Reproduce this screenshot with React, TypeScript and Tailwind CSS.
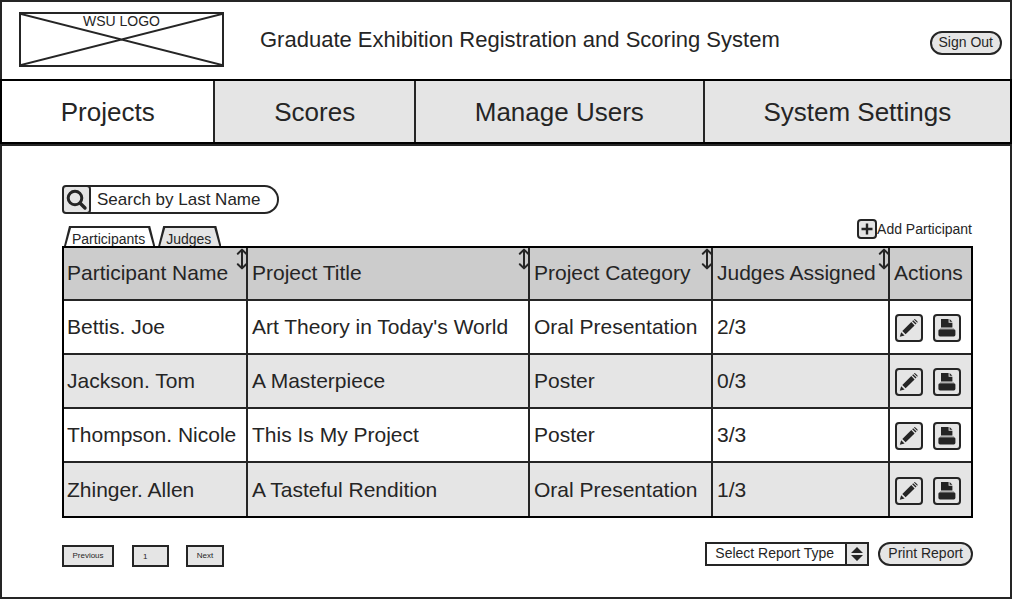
import type { ReactNode } from "react";

const tabs = ["Projects", "Scores", "Manage Users", "System Settings"];

const columns = [
  { label: "Participant Name", sortable: true },
  { label: "Project Title", sortable: true },
  { label: "Project Category", sortable: true },
  { label: "Judges Assigned", sortable: true },
  { label: "Actions", sortable: false },
];

const projects = [
  { name: "Bettis. Joe", title: "Art Theory in Today's World", category: "Oral Presentation", judges: "2/3" },
  { name: "Jackson. Tom", title: "A Masterpiece", category: "Poster", judges: "0/3" },
  { name: "Thompson. Nicole", title: "This Is My Project", category: "Poster", judges: "3/3" },
  { name: "Zhinger. Allen", title: "A Tasteful Rendition", category: "Oral Presentation", judges: "1/3" },
];

function SortIcon() {
  return (
    <svg viewBox="0 0 12 22" className="h-[22px] w-3" fill="none" stroke="#252525" strokeWidth="2" strokeLinecap="round" strokeLinejoin="round" aria-hidden="true">
      <path d="M6 2V20M1.8 5.8L6 1.6L10.2 5.8M1.8 16.2L6 20.4L10.2 16.2" />
    </svg>
  );
}

function PencilIcon() {
  return (
    <svg viewBox="0 0 24 24" className="size-6" fill="#252525" aria-hidden="true">
      <path d="M2.8 20.8L4.2 16.2L7.6 19.5Z" />
      <path d="M5.3 14.9L14.3 6.1L17.6 9.4L8.6 18.3Z" />
      <path d="M15.2 5.2L16.2 4.2L19.5 7.5L18.5 8.5Z" />
      <path d="M17 3.4Q17.7 2.7 18.4 3.4L20.3 5.3Q21 6 20.3 6.7L20.2 6.8L16.9 3.5Z" />
    </svg>
  );
}

function PrinterIcon() {
  return (
    <svg viewBox="0 0 24 24" className="size-6" fill="#252525" aria-hidden="true">
      <path d="M6 3H13.6V6.8H17.4V11.4H6Z" />
      <path d="M14.6 3L17.4 5.8H14.6Z" />
      <rect x="3.4" y="13.2" width="17" height="7.2" rx="1.6" />
      <path d="M5 12.8H19" stroke="#888888" strokeWidth="0.8" />
    </svg>
  );
}

function IconButton({ label, children }: { label: string; children: ReactNode }) {
  return (
    <button type="button" aria-label={label} className="flex size-7 items-center justify-center rounded border-2 border-[#252525] bg-[#e5e5e5]">
      {children}
    </button>
  );
}

function TableTab({ label, active }: { label: string; active?: boolean }) {
  return (
    <button
      type="button"
      role="tab"
      aria-selected={!!active}
      className="grid h-5 bg-[#252525] text-sm leading-5 [clip-path:polygon(5px_0,calc(100%-5px)_0,100%_100%,0_100%)]"
    >
      <span
        className={
          "h-5 pt-[3px] pr-2.5 pl-2 [clip-path:polygon(7px_2px,calc(100%-7px)_2px,calc(100%-2px)_100%,2px_100%)] " +
          (active ? "bg-white" : "bg-[#e5e5e5]")
        }
      >
        {label}
      </span>
    </button>
  );
}

export default function App() {
  return (
    <div className="bg-white font-['Liberation_Sans',Arial,sans-serif] text-[#252525]">
      <header className="flex h-[79px] items-start border-x-2 border-t-2 border-[#252525] pt-2.5 pr-2 pl-[17px]">
        <div className="relative flex h-[55px] w-[205px] shrink-0 justify-center border-2 border-[#252525]">
          <svg viewBox="0 0 201 51" preserveAspectRatio="none" className="absolute inset-0 size-full" stroke="#252525" strokeWidth="2" aria-hidden="true">
            <path d="M0 0L201 51M0 51L201 0" />
          </svg>
          <span className="relative text-sm leading-3.5">WSU LOGO</span>
        </div>
        <h1 className="ml-9 flex-1 pt-3 text-[22px] leading-8">Graduate Exhibition Registration and Scoring System</h1>
        <button type="button" className="mt-[19px] h-6 rounded-full border-2 border-[#252525] bg-[#e5e5e5] px-[7px] pb-0.5 text-sm leading-[18px]">
          Sign Out
        </button>
      </header>

      <nav className="flex h-[65px] border-x-2 border-y-2 border-black text-[26px]">
        {tabs.map((tab, i) => (
          <a
            key={tab}
            href="#"
            aria-current={i === 0 ? "page" : undefined}
            className={
              "flex flex-auto items-center justify-center border-[#252525] px-10 pt-0.5 whitespace-nowrap not-last:border-r-2 " +
              (i === 0 ? "bg-white" : "bg-[#e5e5e5]")
            }
          >
            {tab}
          </a>
        ))}
      </nav>

      <main className="border-2 border-[#252525] pt-[39px] pr-[37px] pb-[30px] pl-[60px]">
        <form className="flex h-[29px] w-[217px]" role="search">
          <button type="button" aria-label="Search" className="flex w-[29px] shrink-0 items-center justify-center rounded border-2 border-[#252525] bg-[#e5e5e5]">
            <svg viewBox="0 0 24 24" className="size-6" fill="none" stroke="#252525" aria-hidden="true">
              <circle cx="10" cy="10" r="6.8" strokeWidth="3" />
              <path d="M15.2 15.2L20 20" strokeWidth="3.4" strokeLinecap="round" />
            </svg>
          </button>
          <input
            type="text"
            aria-label="Search by Last Name"
            placeholder="Search by Last Name"
            className="-ml-1 min-w-0 flex-1 rounded-r-full border-2 border-l-0 border-[#252525] bg-transparent pl-2.5 text-[17px] outline-none placeholder:text-[#252525] placeholder:opacity-100"
          />
        </form>

        <div className="mt-[5px] flex h-[27px] items-end justify-between">
          <div role="tablist" className="ml-0.5 flex gap-[3px]">
            <TableTab label="Participants" active />
            <TableTab label="Judges" />
          </div>
          <button type="button" className="mr-px mb-[7px] flex items-center text-sm leading-5">
            <span className="flex size-5 items-center justify-center rounded-sm border-2 border-[#252525] bg-[#e5e5e5]">
              <svg viewBox="0 0 12 12" className="size-3" stroke="#252525" strokeWidth="2.4" aria-hidden="true">
                <path d="M6 0.5V11.5M0.5 6H11.5" />
              </svg>
            </span>
            Add Participant
          </button>
        </div>

        <table className="w-full table-fixed border-separate border-spacing-0 border-2 border-black text-left text-[21px] leading-6 whitespace-nowrap">
          <colgroup>
            <col className="w-[184px]" />
            <col />
            <col className="w-[183px]" />
            <col className="w-[177px]" />
            <col className="w-[81px]" />
          </colgroup>
          <thead>
            <tr className="h-[53px] bg-[#cccccc]">
              {columns.map((column) => (
                <th key={column.label} scope="col" className="relative border-b-2 border-[#252525] pt-0 pb-0.5 pl-1 font-normal first:pl-[3px] not-last:border-r-2">
                  {column.label}
                  {column.sortable && (
                    <button type="button" aria-label={"Sort by " + column.label} className="absolute top-0 -right-0.5">
                      <SortIcon />
                    </button>
                  )}
                </th>
              ))}
            </tr>
          </thead>
          <tbody>
            {projects.map((project) => (
              <tr key={project.name} className="h-[54px] even:bg-[#e5e5e5] last:h-[53px] *:border-[#252525] *:py-0 *:pl-1 *:first:pl-[3px] *:not-last:border-r-2 not-last:*:border-b-2">
                <td>{project.name}</td>
                <td>{project.title}</td>
                <td>{project.category}</td>
                <td>{project.judges}</td>
                <td>
                  <div className="flex gap-2.5 pt-0.5 pl-px">
                    <IconButton label={"Edit " + project.name}>
                      <PencilIcon />
                    </IconButton>
                    <IconButton label={"Print " + project.name}>
                      <PrinterIcon />
                    </IconButton>
                  </div>
                </td>
              </tr>
            ))}
          </tbody>
        </table>

        <div className="mt-6 flex items-start justify-between">
          <div className="mt-[3px] flex text-[8px] leading-[18px] *:h-[22px] *:border-2 *:border-[#252525] *:bg-[#e5e5e5]">
            <button type="button" className="w-[52px]">Previous</button>
            <input type="text" aria-label="Page" defaultValue="1" className="ml-[18px] w-[37px] pl-[9px]" />
            <button type="button" className="ml-[17px] w-[38px]">Next</button>
          </div>
          <div className="flex gap-[9px] text-sm leading-[18px]">
            <div className="grid w-[164px] *:[grid-area:1/1]">
              <select aria-label="Report type" className="h-6 appearance-none border-2 border-[#252525] bg-white pb-0.5 pl-2 leading-[18px]">
                <option>Select Report Type</option>
              </select>
              <span className="pointer-events-none flex h-6 w-6 items-center justify-center justify-self-end border-2 border-[#252525] bg-[#e5e5e5]">
                <svg viewBox="0 0 12 14" className="h-3.5 w-3" fill="#252525" aria-hidden="true">
                  <path d="M6 0L12 6H0ZM6 14L0 8H12Z" />
                </svg>
              </span>
            </div>
            <button type="button" className="h-6 rounded-full border-2 border-[#252525] bg-[#e5e5e5] px-2 pb-0.5">Print Report</button>
          </div>
        </div>
      </main>
    </div>
  );
}
